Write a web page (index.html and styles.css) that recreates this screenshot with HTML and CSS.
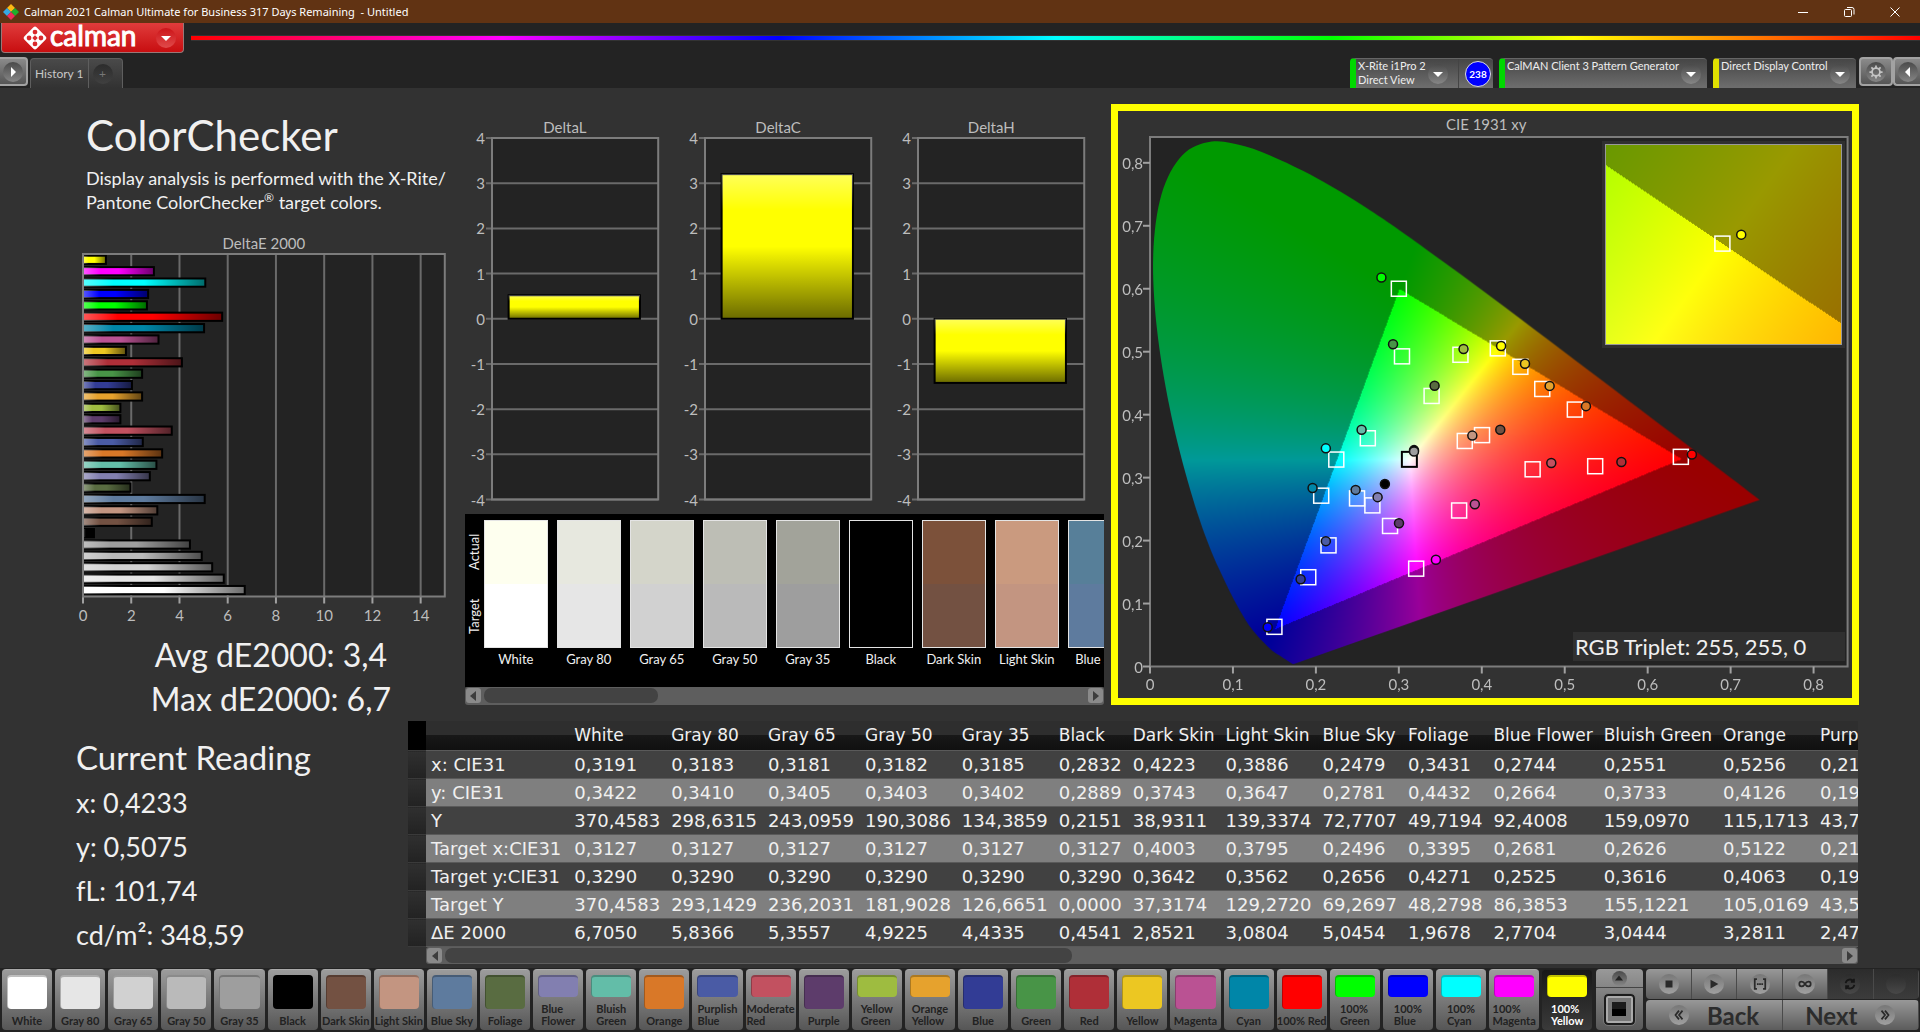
FILE: index.html
```html
<!DOCTYPE html>
<html lang="en">
<head>
    <meta charset="UTF-8">
    <meta name="viewport" content="width=device-width, initial-scale=1.0">
    <title>Calman 2021 - Untitled</title>
    <link rel="stylesheet" href="styles.css">
</head>
<body>
    <header class="titlebar">
        <svg class="app-icon" viewBox="0 0 16 16">
            <path d="M8 0l4 4-4 4-4-4z" fill="#fdb913"/>
            <path d="M4 4l4 4-4 4-4-4z" fill="#36a9e1"/>
            <path d="M12 4l4 4-4 4-4-4z" fill="#1fae2b"/>
            <path d="M8 8l4 4-4 4-4-4z" fill="#ee2a5b"/>
        </svg>
        <span class="app-title">Calman 2021 Calman Ultimate for Business 317 Days Remaining&nbsp; - Untitled</span>
        <button class="win-btn" aria-label="Minimize"><svg viewBox="0 0 12 12"><path d="M1 6.5h10"/></svg></button>
        <button class="win-btn" aria-label="Restore"><svg viewBox="0 0 12 12"><rect x="1.5" y="3.5" width="7" height="7" rx="1"/><path d="M4 1.5h5a2 2 0 0 1 2 2v5"/></svg></button>
        <button class="win-btn" aria-label="Close"><svg viewBox="0 0 12 12"><path d="M1.500 1.500l9 9M10.500 1.500l-9 9"/></svg></button>
    </header>

    <div class="brandbar">
        <button class="brand">
            <svg class="brand-mark" viewBox="0 0 24 24">
                <rect x="4" y="4" width="16" height="16" rx="2" transform="rotate(45 12 12)" fill="#fff"/>
                <g fill="#d9292c">
                    <circle cx="12" cy="6.500" r="2.200"/><circle cx="6.500" cy="12" r="2.200"/>
                    <circle cx="17.500" cy="12" r="2.200"/><circle cx="12" cy="17.500" r="2.200"/>
                    <path d="M12 9.500l2.500 2.500-2.500 2.500-2.500-2.500z"/>
                </g>
            </svg>
            <span class="brand-name">calman</span>
            <span class="knob knob-red"><svg viewBox="0 0 10 10"><path d="M0 3h10L5 8z"/></svg></span>
        </button>
        <div class="rainbow"></div>
    </div>

    <nav class="tabs">
        <button class="side-btn side-left" aria-label="Expand left panel"><span class="knob"><svg viewBox="0 0 10 10"><path d="M3 0v10l5-5z"/></svg></span></button>
        <button class="tab">History 1</button>
        <button class="tab tab-add" aria-label="Add tab"><span class="knob knob-dark">+</span></button>
        <div class="spacer"></div>
        <button class="device device-meter ok">
            <span class="device-text">X-Rite i1Pro 2<br>Direct View</span>
            <span class="knob"><svg viewBox="0 0 10 10"><path d="M0 3h10L5 8z"/></svg></span>
            <span class="counter"><b>238</b></span>
        </button>
        <button class="device device-source ok">
            <span class="device-text">CalMAN Client 3 Pattern Generator</span>
            <span class="knob"><svg viewBox="0 0 10 10"><path d="M0 3h10L5 8z"/></svg></span>
        </button>
        <button class="device device-display warn">
            <span class="device-text">Direct Display Control</span>
            <span class="knob"><svg viewBox="0 0 10 10"><path d="M0 3h10L5 8z"/></svg></span>
        </button>
        <button class="side-btn side-gear" aria-label="Settings"><span class="knob"><svg class="gear" viewBox="0 0 16 16"><circle cx="8" cy="8" r="4.500"/><path d="M8 .500v3M8 12.500v3M.500 8h3M12.500 8h3M2.700 2.700l2.100 2.100M11.200 11.200l2.100 2.100M13.300 2.700l-2.100 2.100M4.800 11.200l-2.100 2.100"/></svg></span></button>
        <button class="side-btn side-right" aria-label="Expand right panel"><span class="knob"><svg viewBox="0 0 10 10"><path d="M7 0v10L2 5z"/></svg></span></button>
    </nav>

    <main>
        <section class="upper">
            <div class="summary">
                <h1>ColorChecker</h1>
                <p class="intro">Display analysis is performed with the X-Rite/<br>Pantone ColorChecker<sup>®</sup> target colors.</p>
                <div class="chart-title">DeltaE 2000</div>
                <svg class="plot plot-de" id="deltaE"></svg>
                <div class="stat">Avg dE2000: 3,4</div>
                <div class="stat">Max dE2000: 6,7</div>
            </div>

            <div class="middle">
                <div class="deltas">
                    <div class="delta"><div class="chart-title">DeltaL</div><svg class="plot" id="deltaL"></svg></div>
                    <div class="delta"><div class="chart-title">DeltaC</div><svg class="plot" id="deltaC"></svg></div>
                    <div class="delta"><div class="chart-title">DeltaH</div><svg class="plot" id="deltaH"></svg></div>
                </div>
                <div class="compare">
                    <div class="compare-side"><span>Actual</span><span>Target</span></div>
                    <div class="compare-list" id="compare"></div>
                </div>
                <div class="scrollbar">
                    <button class="arrow" aria-label="Scroll left"><svg viewBox="0 0 10 12"><path d="M8 1v10L2 6z"/></svg></button>
                    <div class="track"><div class="thumb thumb-compare"></div></div>
                    <button class="arrow" aria-label="Scroll right"><svg viewBox="0 0 10 12"><path d="M2 1v10l6-5z"/></svg></button>
                </div>
            </div>

            <div class="cie">
                <div class="chart-title">CIE 1931 xy</div>
                <div class="cie-plot">
                    <canvas id="locus" width="699" height="531"></canvas>
                    <svg class="cie-marks" id="cieMarks"></svg>
                    <div class="inset">
                        <canvas id="insetField" width="235" height="197"></canvas>
                        <svg class="cie-marks" id="insetMarks"></svg>
                    </div>
                    <div class="triplet">RGB Triplet: 255, 255, 0</div>
                </div>
            </div>
        </section>

        <section class="lower">
            <div class="reading">
                <h2>Current Reading</h2>
                <p>x: 0,4233</p>
                <p>y: 0,5075</p>
                <p>fL: 101,74</p>
                <p>cd/m²: 348,59</p>
            </div>
            <div class="data">
                <div class="data-view">
                    <table id="dataTable"></table>
                </div>
                <div class="scrollbar scrollbar-data">
                    <button class="arrow" aria-label="Scroll left"><svg viewBox="0 0 10 12"><path d="M8 1v10L2 6z"/></svg></button>
                    <div class="track"><div class="thumb thumb-data"></div></div>
                    <button class="arrow" aria-label="Scroll right"><svg viewBox="0 0 10 12"><path d="M2 1v10l6-5z"/></svg></button>
                </div>
            </div>
        </section>
    </main>

    <footer class="bottombar">
        <div class="patches" id="patches"></div>
        <div class="pattern">
            <button class="pattern-up" aria-label="More patterns"><span class="knob"><svg viewBox="0 0 10 10"><path d="M0 8h10L5 2z"/></svg></span></button>
            <button class="pattern-window" aria-label="Pattern window"><span class="window-frame"><span></span></span></button>
        </div>
        <div class="controls">
            <div class="transport">
                <button aria-label="Stop"><span class="knob"><svg viewBox="0 0 16 16"><path d="M4 4h8v8H4z"/></svg></span></button>
                <button aria-label="Play"><span class="knob"><svg viewBox="0 0 16 16"><path d="M4 3l9 5-9 5z"/></svg></span></button>
                <button aria-label="Read series"><span class="knob"><svg class="line" viewBox="0 0 16 16"><path d="M4.500 2.500H2v11h2.500M11.500 2.500H14v11h-2.500"/><path d="M4.500 8h2M7 8h2M9.500 8h2"/></svg></span></button>
                <button aria-label="Read continuous"><span class="knob"><svg class="line" viewBox="0 0 16 16"><path d="M8 8C6 4.500 1.500 4.500 1.500 8S6 11.500 8 8s6.500-3.500 6.500 0S10 11.500 8 8z"/></svg></span></button>
                <button class="off" aria-label="Refresh" disabled><span class="knob"><svg class="line" viewBox="0 0 16 16"><path d="M3 7a5 5 0 0 1 9-2M13 9a5 5 0 0 1-9 2M12.500 2v3.500H9M3.500 14v-3.500H7"/></svg></span></button>
                <button class="off" aria-label="Record" disabled><span class="knob"></span></button>
            </div>
            <div class="paging">
                <button><span class="knob"><svg class="line" viewBox="0 0 16 16"><path d="M8 3L4 8l4 5M12 3L8 8l4 5"/></svg></span>Back</button>
                <button>Next<span class="knob"><svg class="line" viewBox="0 0 16 16"><path d="M4 3l4 5-4 5M8 3l4 5-4 5"/></svg></span></button>
            </div>
        </div>
    </footer>

    <script src="script.js"></script>
</body>
</html>
```
FILE: styles.css
```css
* {
    box-sizing: border-box;
}

body {
    margin: 0;
    min-height: 100vh;
    display: flex;
    flex-direction: column;
    background-color: #323232;
    color: #f0f0f0;
    font-family: Lato, "Open Sans", sans-serif;
    overflow-x: hidden;
}

button {
    margin: 0;
    padding: 0;
    border: 0;
    background: none;
    color: inherit;
    font-family: inherit;
}

h1, h2, p {
    margin: 0;
    font-weight: normal;
}

svg {
    display: block;
}

/* title bar */
.titlebar {
    display: flex;
    align-items: center;
    height: 23px;
    padding-left: 3px;
    background-color: #613313;
}
.app-icon {
    width: 16px;
    height: 16px;
    margin-right: 5px;
}
.app-title {
    flex: 1;
    font-family: "Noto Sans", sans-serif;
    font-size: 11px;
    line-height: 20px;
    color: #fff;
}
.win-btn {
    width: 46px;
    height: 20px;
    display: flex;
    align-items: center;
    justify-content: center;
}
.win-btn:last-child {
    margin-right: 2px;
}
.win-btn svg {
    width: 12px;
    height: 12px;
    fill: none;
    stroke: #fff;
}

/* round marks inside buttons */
.knob {
    flex: none;
    width: 20px;
    height: 20px;
    display: flex;
    align-items: center;
    justify-content: center;
    border-radius: 50%;
    background: linear-gradient(#4a4a4a, #868686);
}
.knob svg {
    width: 10px;
    height: 10px;
    fill: #fff;
}
.knob-red {
    background: linear-gradient(#cc1418, #e04a4a);
}
.knob-dark {
    background: linear-gradient(#2c2c2c, #404040);
    color: #777;
}

/* logo and spectrum */
.brandbar {
    display: flex;
    height: 34px;
    padding-left: 1px;
    background-color: #232323;
}
.brand {
    display: flex;
    align-items: center;
    width: 183px;
    height: 30px;
    padding: 0 7px 0 20px;
    border: 1px solid #9a7777;
    border-top: 0;
    border-radius: 0 0 4px 4px;
    background: linear-gradient(#e03c3c, #c80e10);
    color: #fff;
}
.brand-mark {
    width: 26px;
    height: 26px;
    margin-right: 2px;
}
.brand-name {
    flex: 1;
    text-align: left;
    font-size: 28px;
    line-height: 24px;
    padding-bottom: 6px;
    -webkit-text-stroke: 1px #fff;
}
.rainbow {
    flex: 1;
    height: 6px;
    margin: 12px 0 0 7px;
    border: 1px solid #333;
    border-width: 1px 0;
    background: linear-gradient(to right, #f00, #f0f 18%, #00f 34%, #0ff 50%, #0f0 66%, #ff0 80%, #f00);
}

/* tab strip */
.tabs {
    display: flex;
    align-items: flex-end;
    height: 31px;
    background-color: #232323;
}
.tab {
    height: 30px;
    padding: 0 4px;
    border: 1px solid #5e5e5e;
    border-bottom: 0;
    border-radius: 4px 0 0 0;
    background: linear-gradient(#4a4a4a, #323232);
    color: #c8c8c8;
    font-size: 12px;
}
.tab-add {
    width: 34px;
    border-left: 0;
    border-radius: 0 4px 0 0;
}
.spacer {
    flex: 1;
}
.side-btn {
    align-self: flex-start;
    height: 29px;
    display: flex;
    align-items: center;
    justify-content: center;
    border: 2px solid #a2a2a2;
    border-radius: 4px;
    background: linear-gradient(#8a8a8a, #555);
}
.side-left {
    width: 28px;
    margin-right: 2px;
    border-left: 0;
    border-radius: 0 4px 4px 0;
}
.side-gear {
    width: 34px;
    margin-left: 3px;
}
.side-right {
    width: 27px;
    border-right: 0;
    border-radius: 4px 0 0 4px;
}
.knob .gear {
    width: 14px;
    height: 14px;
    fill: none;
    stroke: #c4c4c4;
    stroke-width: 2;
}
.device {
    display: flex;
    align-items: center;
    height: 30px;
    margin-left: 6px;
    border-radius: 4px 4px 0 0;
    border-left: 6px solid #00d800;
    border-top: 1px solid #666;
    background: linear-gradient(#464646, #6e6e6e);
    color: #eee;
    font-size: 11px;
    line-height: 14px;
}
.device.warn {
    border-left-color: #e0e000;
}
.device-meter {
    width: 143px;
}
.device-source {
    width: 208px;
}
.device-display {
    width: 143px;
}
.device-text {
    flex: 1;
    align-self: flex-start;
    padding-left: 2px;
    text-align: left;
    white-space: nowrap;
}
.device .knob {
    margin-right: 6px;
}
.device-meter .knob {
    margin-right: 10px;
}
.counter {
    align-self: stretch;
    display: flex;
    align-items: center;
    padding: 0 2px 0 6px;
    border-left: 1px solid #444;
}
.counter b {
    width: 26px;
    height: 26px;
    border: 1px solid #ddd;
    border-radius: 50%;
    background-color: #00f;
    color: #fff;
    font-size: 10px;
    line-height: 24px;
    text-align: center;
}

/* main area */
main {
    flex: 1;
    display: flex;
    flex-direction: column;
}
.upper {
    flex: 1;
    display: grid;
    grid-template-columns: 362fr 653fr 748fr;
    column-gap: 7px;
    min-height: 500px;
    padding: 16px 61px 0 83px;
}
.upper > div {
    min-width: 0;
    display: flex;
    flex-direction: column;
}
.chart-title {
    color: #bdbdbd;
    font-size: 15px;
    line-height: 22px;
    text-align: center;
}
.plot {
    flex: 1;
    display: block;
    width: 100%;
    height: 0;
    overflow: visible;
    background-color: #232323;
}
.plot text, .cie-marks text {
    fill: #bdbdbd;
    font-size: 15px;
}
.grid-line {
    stroke: #6a6a6a;
    stroke-width: 2;
}
.frame {
    fill: none;
    stroke: #7c7c7c;
    stroke-width: 2;
}
.tick {
    stroke: #a0a0a0;
    stroke-width: 2;
}
.end {
    text-anchor: end;
}
.center {
    text-anchor: middle;
}

h1 {
    padding-left: 3px;
    font-size: 42px;
    line-height: 62px;
}
.intro {
    margin-bottom: 18px;
    padding-left: 3px;
    font-size: 18px;
    line-height: 24px;
    white-space: nowrap;
}
.intro sup {
    font-size: 12px;
    line-height: 0;
}
.plot-de {
    margin-bottom: 36px;
}
.stat {
    padding-left: 14px;
    font-size: 32px;
    line-height: 44px;
    text-align: center;
}

.upper .middle {
    padding: 12px 0 16px 13px;
}
.deltas {
    flex: 1;
    display: grid;
    grid-template-columns: repeat(3, minmax(0, 1fr));
    column-gap: 15px;
    padding-right: 15px;
    margin-bottom: 14px;
}
.delta {
    display: flex;
    flex-direction: column;
    padding: 0 5px 0 27px;
}
.delta .chart-title {
    padding-right: 20px;
}
.compare {
    display: flex;
    height: 173px;
    padding-top: 6px;
    background-color: #000;
}
.compare-side {
    display: flex;
    flex-direction: column;
    width: 19px;
    height: 128px;
}
.compare-side span {
    flex: 1;
    writing-mode: vertical-rl;
    transform: rotate(180deg);
    font-size: 13px;
    line-height: 19px;
    text-align: center;
}
.compare-list {
    flex: 1;
    display: flex;
    gap: 9px;
    overflow: hidden;
}
.compare-item {
    flex: none;
    width: 64px;
    font-size: 13px;
    line-height: 22px;
    text-align: center;
    white-space: nowrap;
}
.compare-color {
    height: 128px;
    border: 1px solid #e4e4e4;
}
.compare-color div {
    height: 50%;
}

.scrollbar {
    display: flex;
    align-items: center;
    height: 18px;
    padding: 0 1px;
    border-radius: 3px;
    background-color: #5e5e5e;
}
.arrow {
    width: 15px;
    height: 15px;
    border-radius: 3px;
    background-color: #8a8a8a;
}
.arrow svg {
    width: 10px;
    height: 12px;
    margin: 0 auto;
    fill: #3c3c3c;
}
.track {
    flex: 1;
    padding: 0 3px;
}
.thumb {
    height: 15px;
    border-radius: 7px;
    background-color: #434343;
}
.thumb-compare {
    width: 29%;
}
.thumb-data {
    width: 45%;
}

/* chromaticity chart */
.upper .cie {
    margin-bottom: 16px;
    padding: 0 4px 31px 32px;
    border: 7px solid #ff0;
}
.cie .chart-title {
    padding-right: 26px;
    line-height: 26px;
}
.cie-plot {
    flex: 1;
    position: relative;
    display: flex;
    background-color: #232323;
}
.cie-plot canvas {
    display: block;
    position: absolute;
    width: 100%;
    height: 100%;
}
.cie-marks {
    position: absolute;
    width: 100%;
    height: 100%;
    overflow: visible;
}
.target {
    fill: none;
    stroke: #fff;
    stroke-width: 1.500;
}
.target-white {
    stroke: #000;
    stroke-width: 2;
}
.actual {
    stroke: #111;
    stroke-width: 1.500;
}
.inset {
    position: absolute;
    top: 7px;
    right: 6px;
    width: 34%;
    height: 38%;
    border: 1px solid #999;
    outline: 3px solid #303030;
}
.triplet {
    position: absolute;
    right: 3px;
    bottom: 6px;
    width: 39%;
    padding-left: 2px;
    background-color: #303030;
    font-size: 22px;
    line-height: 29px;
    white-space: nowrap;
}

/* reading and data table */
.lower {
    display: grid;
    grid-template-columns: 408fr 1450fr;
    padding-right: 62px;
}
.reading {
    padding: 12px 0 0 76px;
    font-size: 27px;
    line-height: 44px;
}
.reading h2 {
    font-size: 33px;
    line-height: 48px;
}
.data {
    min-width: 0;
}
.data-view {
    overflow: hidden;
}
table {
    border-collapse: collapse;
    font-family: "DejaVu Sans", sans-serif;
    font-size: 18px;
}
th, td {
    height: 28px;
    padding: 0 5px 0 6px;
    border-bottom: 1px solid #5a5a5a;
    font-weight: normal;
    line-height: 20px;
    text-align: left;
    white-space: nowrap;
}
.stub {
    min-width: 18px;
    padding: 0;
    border-bottom-color: #3a3a3a;
    background: linear-gradient(#303030, #222);
}
.label {
    padding: 0 7px 0 5px;
}
thead th {
    height: 30px;
    background: linear-gradient(#2e2e2e 50%, #181818 50%, #101010);
    font-size: 17px;
}
thead .stub {
    background: #000;
}
tbody tr {
    background-color: #414141;
}
tbody tr:nth-child(even) {
    background-color: #7f7f7f;
}
.scrollbar-data {
    height: 17px;
    margin: 0 0 4px 18px;
}

/* bottom bar */
.bottombar {
    display: flex;
    gap: 3px;
    padding: 1px 1px 2px 2px;
    background-color: #232323;
}
.patches {
    flex: 1593;
    display: flex;
    gap: 3px;
    min-width: 0;
}
.patch {
    flex: 1 1 0;
    min-width: 0;
    height: 61px;
    display: flex;
    flex-direction: column;
    align-items: center;
    padding: 5px 0 3px;
    border-top: 1px solid #aaa;
    border-radius: 4px;
    background: linear-gradient(#9c9c9c, #565656);
    color: #222;
    font-size: 11px;
    font-weight: bold;
    line-height: 12px;
    text-align: left;
    white-space: nowrap;
}
.patch-color {
    flex: 1;
    width: 80%;
    margin-bottom: 6px;
    border: 1px solid rgba(0, 0, 0, 0.25);
    border-width: 2px 0 0 1px;
    border-radius: 4px;
}
.patch.selected {
    border-top-color: #222;
    background: linear-gradient(#181818, #3a3a3a);
    color: #fff;
}
.pattern {
    flex: 48;
    display: flex;
    flex-direction: column;
    border-radius: 4px;
    background: linear-gradient(#999, #585858);
}
.pattern-up {
    height: 19px;
    display: flex;
    justify-content: center;
    align-items: center;
    border-bottom: 1px solid #444;
}
.pattern-up .knob {
    width: 15px;
    height: 15px;
}
.pattern-up .knob svg {
    width: 8px;
    height: 8px;
    fill: #222;
}
.pattern-window {
    flex: 1;
    display: flex;
    align-items: center;
    justify-content: center;
}
.window-frame {
    width: 31px;
    height: 31px;
    display: flex;
    align-items: center;
    justify-content: center;
    border: 2px solid #1c1c1c;
    border-radius: 4px;
    outline: 1px solid #777;
    box-shadow: inset 0 0 0 2px #aaa;
    background-color: #777;
}
.window-frame span {
    width: 14px;
    height: 14px;
    background: linear-gradient(#1c1c1c 50%, #000 50%);
}
.controls {
    flex: 273;
    display: flex;
    flex-direction: column;
    gap: 1px;
}
.transport, .paging {
    flex: 1;
    display: flex;
    border-radius: 4px;
    overflow: hidden;
}
.transport button, .paging button {
    flex: 1;
    display: flex;
    align-items: center;
    justify-content: center;
    border-right: 1px solid #4a4a4a;
    background: linear-gradient(#989898, #5c5c5c);
    color: #2c2c2c;
}
.controls .knob {
    background: linear-gradient(#777, #a0a0a0);
}
.controls .knob svg {
    width: 14px;
    height: 14px;
    fill: #2a2a2a;
}
.controls .knob .line {
    fill: none;
    stroke: #2a2a2a;
    stroke-width: 2;
}
.transport .off {
    background: linear-gradient(#2c2c2c, #3c3c3c);
}
.transport .off .knob {
    background: linear-gradient(#2c2c2c, #484848);
}
.transport .off .knob .line {
    stroke: #161616;
}
.paging button {
    gap: 18px;
    font-size: 24px;
    font-weight: bold;
}
```
FILE: script.js
```js
// name, target color, deltaE
const patches = [
    ['White', '#ffffff', 6.705], ['Gray 80', '#e6e6e6', 5.8366], ['Gray 65', '#d1d1d1', 5.3557],
    ['Gray 50', '#bababa', 4.9225], ['Gray 35', '#9e9e9e', 4.4335], ['Black', '#000000', 0.4541],
    ['Dark Skin', '#735142', 2.8521], ['Light Skin', '#c39581', 3.0804], ['Blue Sky', '#5e7b9e', 5.0454],
    ['Foliage', '#596c41', 1.9678], ['Blue Flower', '#827fb0', 2.7704], ['Bluish Green', '#63bda8', 3.0444],
    ['Orange', '#d97828', 3.2811], ['Purplish Blue', '#4a5ba5', 2.4783], ['Moderate Red', '#c25160', 3.68],
    ['Purple', '#5d3c6b', 1.55], ['Yellow Green', '#9ebc40', 1.55], ['Orange Yellow', '#e6a22d', 2.45],
    ['Blue', '#323c95', 2.03], ['Green', '#489447', 2.45], ['Red', '#af2f38', 4.1],
    ['Yellow', '#ecc722', 1.78], ['Magenta', '#ba5293', 3.13], ['Cyan', '#0086a8', 5.02],
    ['100% Red', '#ff0000', 5.77], ['100% Green', '#00ff00', 2.65], ['100% Blue', '#0000ff', 2.7],
    ['100% Cyan', '#00ffff', 5.07], ['100% Magenta', '#ff00ff', 2.94], ['100% Yellow', '#ffff00', 0.95]
];

const actualColors = ['#feffef', '#e7e8df', '#d4d5ca', '#bdbeb5', '#a2a39a', '#000000', '#7c513a', '#ca9a7f', '#577f99'];

const rows = [
    ['x: CIE31', '0,3191', '0,3183', '0,3181', '0,3182', '0,3185', '0,2832', '0,4223', '0,3886', '0,2479', '0,3431', '0,2744', '0,2551', '0,5256', '0,2124'],
    ['y: CIE31', '0,3422', '0,3410', '0,3405', '0,3403', '0,3402', '0,2889', '0,3743', '0,3647', '0,2781', '0,4432', '0,2664', '0,3733', '0,4126', '0,1975'],
    ['Y', '370,4583', '298,6315', '243,0959', '190,3086', '134,3859', '0,2151', '38,9311', '139,3374', '72,7707', '49,7194', '92,4008', '159,0970', '115,1713', '43,7026'],
    ['Target x:CIE31', '0,3127', '0,3127', '0,3127', '0,3127', '0,3127', '0,3127', '0,4003', '0,3795', '0,2496', '0,3395', '0,2681', '0,2626', '0,5122', '0,2164'],
    ['Target y:CIE31', '0,3290', '0,3290', '0,3290', '0,3290', '0,3290', '0,3290', '0,3642', '0,3562', '0,2656', '0,4271', '0,2525', '0,3616', '0,4063', '0,1924'],
    ['Target Y', '370,4583', '293,1429', '236,2031', '181,9028', '126,6651', '0,0000', '37,3174', '129,2720', '69,2697', '48,2798', '86,3853', '155,1221', '105,0169', '43,5412'],
    ['ΔE 2000', '6,7050', '5,8366', '5,3557', '4,9225', '4,4335', '0,4541', '2,8521', '3,0804', '5,0454', '1,9678', '2,7704', '3,0444', '3,2811', '2,4783']
];

const targets = [
    [0.3, 0.6], [0.3038, 0.4926], [0.3743, 0.4951], [0.4193, 0.5053], [0.3395, 0.4297], [0.2626, 0.3625],
    [0.2246, 0.3287], [0.2064, 0.2713], [0.2496, 0.267], [0.2681, 0.2559], [0.2894, 0.2232], [0.2152, 0.1924],
    [0.1908, 0.1418], [0.15, 0.063], [0.3209, 0.1554], [0.3727, 0.2478], [0.3795, 0.3582], [0.4003, 0.3675],
    [0.4465, 0.476], [0.4729, 0.4408], [0.5122, 0.4081], [0.64, 0.333], [0.5367, 0.3181], [0.4613, 0.3132]
];

const actuals = [
    [0.279, 0.6178, '#00ff00'], [0.293, 0.5117, '#489447'], [0.378, 0.5043, '#9ebc40'], [0.4233, 0.509, '#ffff00'],
    [0.3431, 0.446, '#596c41'], [0.2551, 0.376, '#63bda8'], [0.212, 0.3465, '#00ffff'], [0.196, 0.2836, '#0086a8'],
    [0.2479, 0.2805, '#5e7b9e'], [0.2744, 0.269, '#827fb0'], [0.2832, 0.29, '#000000'], [0.3002, 0.2275, '#5d3c6b'],
    [0.212, 0.1991, '#4a5ba5'], [0.1816, 0.1387, '#323c95'], [0.1419, 0.0623, '#0000ff'], [0.3447, 0.1695, '#ff00ff'],
    [0.3916, 0.2577, '#ba5293'], [0.3886, 0.3667, '#c39581'], [0.4223, 0.376, '#735142'], [0.3183, 0.3437, '#000000'],
    [0.3183, 0.3415, '#9e9e9e'], [0.4521, 0.4809, '#ecc722'], [0.4818, 0.4457, '#e6a22d'], [0.5256, 0.4135, '#d97828'],
    [0.6533, 0.3366, '#ff0000'], [0.5683, 0.3249, '#af2f38'], [0.4838, 0.3231, '#c25160']
];

const spectrum = [
    [0.1741, 0.005], [0.1714, 0.0051], [0.1644, 0.0109], [0.1566, 0.0177], [0.144, 0.0297], [0.1241, 0.0578],
    [0.1096, 0.0868], [0.0913, 0.1327], [0.0687, 0.2007], [0.0454, 0.295], [0.0235, 0.4127], [0.0082, 0.5384],
    [0.0039, 0.6548], [0.0139, 0.7502], [0.0389, 0.812], [0.0743, 0.8338], [0.1142, 0.8262], [0.1547, 0.8059],
    [0.1929, 0.7816], [0.2296, 0.7543], [0.2658, 0.7243], [0.3016, 0.6923], [0.3731, 0.6245], [0.4441, 0.5547],
    [0.5125, 0.4866], [0.5752, 0.4242], [0.627, 0.3725], [0.6658, 0.334], [0.6915, 0.3083], [0.719, 0.2809],
    [0.7347, 0.2653]
];

function add(parent, tag, attrs, text) {
    const el = document.createElementNS('http://www.w3.org/2000/svg', tag);
    for (const key in attrs) {
        el.setAttribute(key, attrs[key]);
    }
    if (text !== undefined) {
        el.textContent = text;
    }
    parent.appendChild(el);
    return el;
}

function gradient(svg, id, vertical) {
    const g = add(svg, 'linearGradient', vertical ? { id: id, x2: 0, y2: 1 } : { id: id });
    const stops = [[0, '#fff', 0.35], [0.25, '#fff', 0], [0.5, '#000', 0], [1, '#000', 0.58]];
    stops.forEach(s => add(g, 'stop', { offset: s[0], 'stop-color': s[1], 'stop-opacity': s[2] }));
}

// DeltaE bars, last patch on top
const de = document.getElementById('deltaE');
gradient(de, 'shadeX', false);
for (let v = 0; v <= 14; v += 2) {
    const x = v / 15 * 100 + '%';
    add(de, 'line', { x1: x, x2: x, y1: 0, y2: '100%', class: 'grid-line' });
    const t = add(de, 'svg', { x: x, y: '100%', overflow: 'visible' });
    add(t, 'line', { x1: 0, x2: 0, y1: 0, y2: 7, class: 'tick' });
    add(t, 'text', { x: 0, y: 24, class: 'center' }, v);
}
patches.slice().reverse().forEach((p, i) => {
    const box = { x: 0, y: (i * 3.325 + 0.5) + '%', width: p[2] / 15 * 100 + '%', height: '2.4%' };
    add(de, 'rect', Object.assign({ fill: p[1], stroke: '#000', 'stroke-width': 2 }, box));
    add(de, 'rect', Object.assign({ fill: 'url(#shadeX)' }, box));
});
add(de, 'rect', { width: '100%', height: '100%', class: 'frame' });

function deltaChart(id, value) {
    const svg = document.getElementById(id);
    gradient(svg, id + 'Shade', true);
    for (let v = -4; v <= 4; v++) {
        const y = (4 - v) / 8 * 100 + '%';
        add(svg, 'line', { x1: -6, x2: '100%', y1: y, y2: y, class: 'grid-line' });
        add(svg, 'text', { x: -7, y: y, dy: 6, class: 'end' }, v);
    }
    add(svg, 'rect', { width: '100%', height: '100%', class: 'frame' });
    const box = { x: '10%', width: '79%', y: (4 - Math.max(value, 0)) / 8 * 100 + '%', height: Math.abs(value) / 8 * 100 + '%' };
    add(svg, 'rect', Object.assign({ fill: '#ffff00', stroke: '#000', 'stroke-width': 2 }, box));
    add(svg, 'rect', Object.assign({ fill: 'url(#' + id + 'Shade)' }, box));
}
deltaChart('deltaL', 0.52);
deltaChart('deltaC', 3.2);
deltaChart('deltaH', -1.42);

// linear RGB of a chromaticity, darkened outside of the gamut
function xyColor(x, y) {
    const X = x / y, Z = (1 - x - y) / y;
    const rgb = [
        3.2406 * X - 1.5372 - 0.4986 * Z,
        -0.9689 * X + 1.8758 + 0.0415 * Z,
        0.0557 * X - 0.204 + 1.057 * Z
    ];
    const dim = Math.min(rgb[0], rgb[1], rgb[2]) < 0 ? 153 : 255;
    const max = Math.max(rgb[0], rgb[1], rgb[2]);
    return rgb.map(c => Math.max(c, 0) / max * dim);
}

function paintField(canvas, x0, y0, w, h) {
    const ctx = canvas.getContext('2d');
    const img = ctx.createImageData(canvas.width, canvas.height);
    for (let j = 0; j < canvas.height; j++) {
        for (let i = 0; i < canvas.width; i++) {
            const c = xyColor(x0 + i / canvas.width * w, y0 + (1 - (j + 0.5) / canvas.height) * h);
            const k = (j * canvas.width + i) * 4;
            img.data[k] = c[0];
            img.data[k + 1] = c[1];
            img.data[k + 2] = c[2];
            img.data[k + 3] = 255;
        }
    }
    ctx.putImageData(img, 0, 0);
    return ctx;
}

const SPAN = 0.841;
const locus = document.getElementById('locus');
const ctx = paintField(locus, 0, 0, SPAN, SPAN);
const pts = spectrum.map(p => [p[0] / SPAN * locus.width, (1 - p[1] / SPAN) * locus.height]);
ctx.globalCompositeOperation = 'destination-in';
ctx.beginPath();
ctx.moveTo(pts[0][0], pts[0][1]);
for (let i = 0; i < pts.length - 1; i++) {
    const a = pts[i - 1] || pts[i], b = pts[i], c = pts[i + 1], d = pts[i + 2] || c;
    ctx.bezierCurveTo(b[0] + (c[0] - a[0]) / 6, b[1] + (c[1] - a[1]) / 6, c[0] - (d[0] - b[0]) / 6, c[1] - (d[1] - b[1]) / 6, c[0], c[1]);
}
ctx.closePath();
ctx.fill();

function mark(svg, x, y, color, cls) {
    const g = add(svg, 'svg', { x: x * 100 + '%', y: y * 100 + '%', overflow: 'visible' });
    if (color) {
        add(g, 'circle', { r: 4.5, fill: color, class: 'actual' });
    } else {
        add(g, 'rect', { x: -7.5, y: -7.5, width: 15, height: 15, class: cls });
    }
}

const marks = document.getElementById('cieMarks');
add(marks, 'rect', { width: '100%', height: '100%', class: 'frame' });
for (let i = 0; i <= 8; i++) {
    const pos = i / 10 / SPAN * 100;
    const label = i ? '0,' + i : '0';
    const gx = add(marks, 'svg', { x: pos + '%', y: '100%', overflow: 'visible' });
    add(gx, 'line', { y1: 0, y2: 7, class: 'tick' });
    add(gx, 'text', { y: 23, class: 'center' }, label);
    const gy = add(marks, 'svg', { x: 0, y: 100 - pos + '%', overflow: 'visible' });
    add(gy, 'line', { x1: -7, x2: 0, class: 'tick' });
    add(gy, 'text', { x: -7, y: 6, class: 'end' }, label);
}
targets.forEach(t => mark(marks, t[0] / SPAN, 1 - t[1] / SPAN, null, 'target'));
mark(marks, 0.3127 / SPAN, 1 - 0.329 / SPAN, null, 'target target-white');
actuals.forEach(a => mark(marks, a[0] / SPAN, 1 - a[1] / SPAN, a[2]));

paintField(document.getElementById('insetField'), 0.3943, 0.4803, 0.05, 0.05);
const insetMarks = document.getElementById('insetMarks');
mark(insetMarks, 0.495, 0.495, null, 'target');
mark(insetMarks, 0.575, 0.45, '#ffff00');

document.getElementById('compare').innerHTML = actualColors.map((color, i) =>
    '<div class="compare-item"><div class="compare-color">' +
    '<div style="background-color:' + color + '"></div>' +
    '<div style="background-color:' + patches[i][1] + '"></div>' +
    '</div>' + patches[i][0] + '</div>'
).join('');

const names = patches.slice(0, 14).map(p => '<th scope="col">' + p[0] + '</th>').join('');
document.getElementById('dataTable').innerHTML =
    '<thead><tr><th class="stub"></th><th class="label"></th>' + names + '</tr></thead><tbody>' +
    rows.map(r => '<tr><td class="stub"></td><th scope="row" class="label">' + r[0] + '</th>' +
        r.slice(1).map(c => '<td>' + c + '</td>').join('') + '</tr>').join('') + '</tbody>';

const twoLines = ['Blue Flower', 'Bluish Green', 'Purplish Blue', 'Moderate Red', 'Yellow Green', 'Orange Yellow',
    '100% Green', '100% Blue', '100% Cyan', '100% Magenta', '100% Yellow'];
document.getElementById('patches').innerHTML = patches.map((p, i) =>
    '<button class="patch' + (i === patches.length - 1 ? ' selected' : '') + '">' +
    '<span class="patch-color" style="background-color:' + p[1] + '"></span>' +
    '<span>' + (twoLines.includes(p[0]) ? p[0].replace(' ', '<br>') : p[0]) + '</span></button>'
).join('');
```
